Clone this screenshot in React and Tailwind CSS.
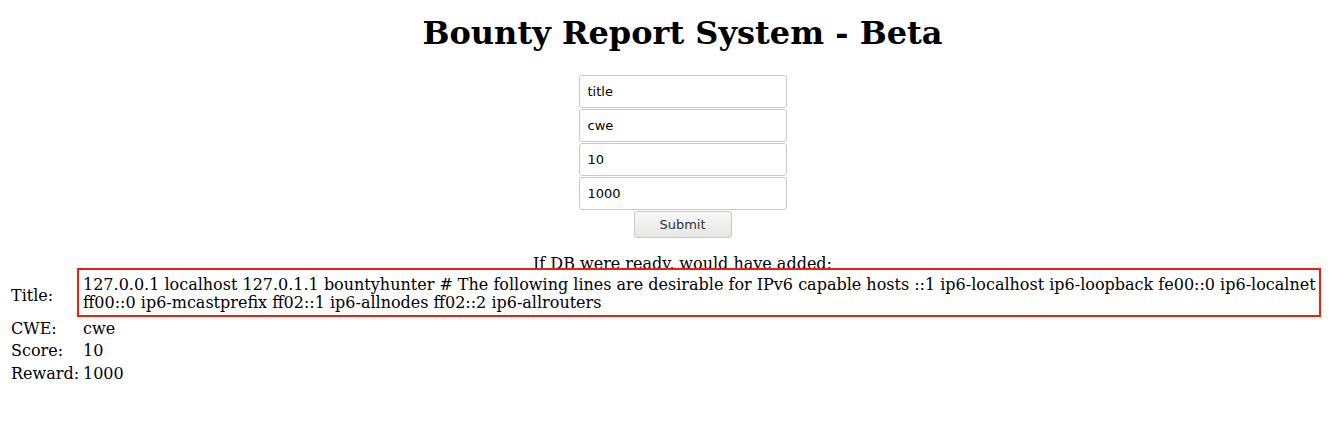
export default function App() {
  const hosts =
    '127.0.0.1 localhost 127.0.1.1 bountyhunter # The following lines are desirable for IPv6 capable hosts ::1 ip6-localhost ip6-loopback fe00::0 ip6-localnet ff00::0 ip6-mcastprefix ff02::1 ip6-allnodes ff02::2 ip6-allrouters';

  return (
    <div className="bg-white min-h-[422px] w-[1341px] overflow-hidden text-black font-['DejaVu_Serif',serif] text-[16px] leading-[19px]">
      <div className="w-[1365px] px-2">
        <h1 className="pt-[15px] text-center text-[32px] leading-[37px] font-bold">
          Bounty Report System - Beta
        </h1>

        <form className="mt-[23px] flex flex-col items-center" onSubmit={(e) => e.preventDefault()}>
          {['title', 'cwe', '10', '1000'].map((v) => (
            <input
              key={v}
              defaultValue={v}
              className="mb-px w-[208px] h-[33px] px-2 rounded-[3px] border border-[#cdc7c2] bg-white text-[13px] text-black font-['DejaVu_Sans',sans-serif] outline-none"
            />
          ))}
          <button
            type="submit"
            className="w-[98px] h-[27px] rounded-[3px] border border-[#cdc7c2] bg-gradient-to-b from-[#f8f8f7] to-[#e8e6e3] text-[13px] text-[#2e3436] font-['DejaVu_Sans',sans-serif]"
          >
            Submit
          </button>
        </form>

        <p className="mt-[16px] text-center">If DB were ready, would have added:</p>
      </div>

      <table className="relative ml-2 -mt-[5px] w-[1313px] table-fixed border-collapse">
        <tbody>
          <tr>
            <td className="w-[69px] pl-[3px] pt-[5px] align-middle whitespace-nowrap">Title:</td>
            <td className="p-0">
              <div className="relative bg-white border-2 border-[#f21d0c] pl-[4px] pr-0 pt-[6px] pb-[3px] leading-[18px]">
                {hosts}
              </div>
            </td>
          </tr>
          <tr>
            <td className="pl-[3px] pt-[2px] pb-[1px] whitespace-nowrap">CWE:</td>
            <td className="pl-[6px] pt-[2px] pb-[1px]">cwe</td>
          </tr>
          <tr>
            <td className="pl-[3px] py-[2px] whitespace-nowrap">Score:</td>
            <td className="pl-[6px] py-[2px]">10</td>
          </tr>
          <tr>
            <td className="pl-[3px] py-[2px] whitespace-nowrap">Reward:</td>
            <td className="pl-[6px] py-[2px]">1000</td>
          </tr>
        </tbody>
      </table>
    </div>
  );
}
